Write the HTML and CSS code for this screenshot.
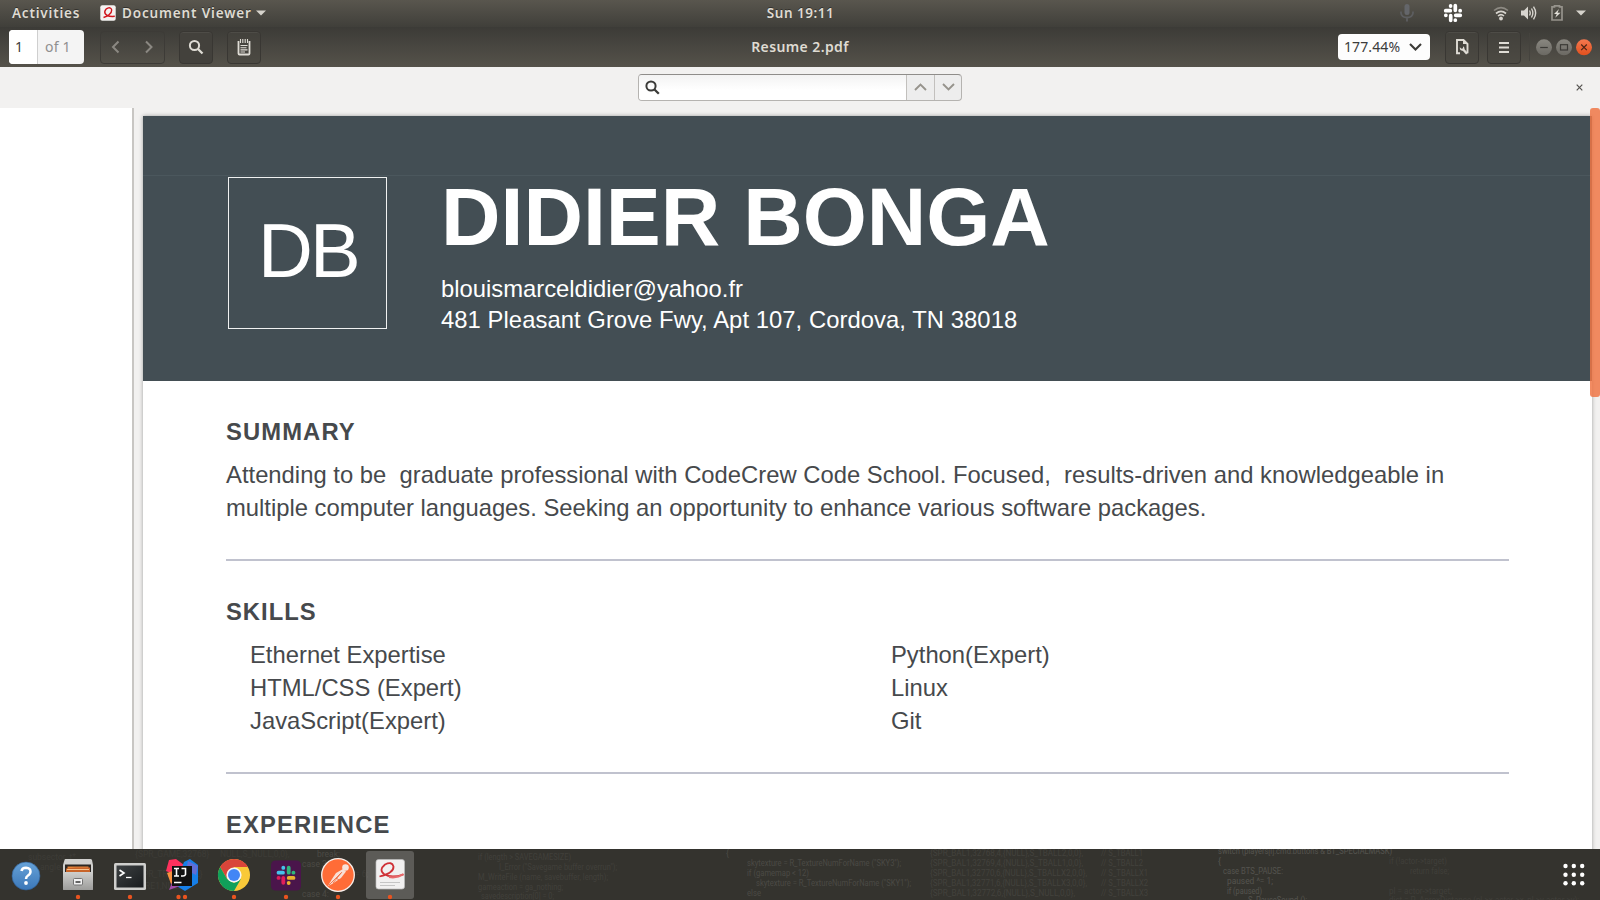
FILE: index.html
```html
<!DOCTYPE html>
<html lang="en">
<head>
<meta charset="utf-8">
<title>Resume 2.pdf</title>
<link rel="stylesheet" href="styles.css">
</head>
<body>
<div class="desktop">
  <div class="topbar">
    <div class="tb-left">
      <span class="activities">Activities</span>
      <svg class="app-ico" width="16" height="16" viewBox="0 0 16 16"><rect x=".3" y=".3" width="15.4" height="15.4" rx="2" fill="#f4f2f1"/><path d="M3.500 12.500C7 11.500 12 8.500 11.700 5C11.300 1.800 6 2 4.800 6.500C4.300 9.500 8 12 14.800 11.300" fill="none" stroke="#d0141c" stroke-width="1.400"/></svg>
      <span class="appname">Document Viewer</span>
      <svg class="caret" width="10" height="6" viewBox="0 0 10 6"><path d="M0 0.500H10L5 5.500Z" fill="#d6d3cc"/></svg>
    </div>
    <div class="clock">Sun 19:11</div>
    <div class="tb-right">
      <svg class="mic" width="14" height="18" viewBox="0 0 14 18"><rect x="4.500" y="0" width="5" height="11" rx="2.500" fill="#64666a"/><path d="M1 7.500V9Q1.500 13.500 7 13.500Q12.500 13.500 13 9V7.500M7 13.500V17.500" fill="none" stroke="#5d5e60" stroke-width="1.800"/></svg>
      <svg class="slack" width="20" height="20" viewBox="0 0 20 20" fill="none" stroke="#fff" stroke-width="3.700" stroke-linecap="round"><path d="M2.700 7.700H7.300M7.600 2.900V3.100M12.300 2.700V7.300M17.100 7.700H17.200M12.700 12.300H17.300M12.300 17V17.200M7.700 12.700V17.300M2.800 12.300H2.900"/></svg>
      <svg class="wifi" width="16" height="15" viewBox="0 0 16 15" fill="none"><path d="M1 4.500Q8-1.300 15 4.500" stroke="#8d8a83" stroke-width="1.600"/><path d="M3 7.500Q8 3.200 13 7.500" stroke="#d8d5cf" stroke-width="1.700"/><path d="M5 10Q8 7.200 11 10" stroke="#d8d5cf" stroke-width="1.500"/><circle cx="8" cy="12.500" r="1.900" fill="#d8d5cf"/></svg>
      <svg class="vol" width="16" height="14" viewBox="0 0 16 14"><path d="M0 4.500H3L7 0.500V13.500L3 9.500H0Z" fill="#d8d5cf"/><path d="M8.500 4.500Q10 7 8.500 9.500M10.500 2.500Q13.200 7 10.500 11.500M12.500 .7Q16.800 7 12.500 13.300" fill="none" stroke="#d8d5cf" stroke-width="1.400"/></svg>
      <svg class="bat" width="12" height="16" viewBox="0 0 12 16"><path d="M3.500 1.900V.8H8.500V1.900H11V15H1V1.900Z" fill="none" stroke="#96938c" stroke-width="1.700"/><path d="M8 4L3 9H5.800L4.200 12.700L9.500 7.700H6.500Z" fill="#e2dfd8"/></svg>
      <svg class="caret2" width="10" height="6" viewBox="0 0 10 6"><path d="M0 0.500H10L5 5.500Z" fill="#d6d3cc"/></svg>
    </div>
  </div>

  <div class="headerbar">
    <div class="pager"><span class="cur">1</span><span class="total">of 1</span></div>
    <div class="nav"><svg width="64" height="31" viewBox="0 0 64 31" fill="none" stroke="#8b8882" stroke-width="2"><path d="M17.500 9.500L12 15L17.500 20.500M45 9.500L50.500 15L45 20.500"/></svg></div>
    <div class="btn find"><svg width="16" height="16" viewBox="0 0 16 16" fill="none" stroke="#dfdcd5"><circle cx="6.500" cy="6.500" r="4.600" stroke-width="2"/><path d="M10 10L14.500 14.500" stroke-width="2.300"/></svg></div>
    <div class="btn note"><svg width="14" height="17" viewBox="0 0 14 17"><path d="M1.500 2V14.500Q1.500 15.500 2.500 15.500H11.500Q12.500 15.500 12.500 14.500V2" fill="none" stroke="#dfdcd5" stroke-width="1.800"/><path d="M3.500 0V4M5.800 0V4M8.200 0V4M10.500 0V4" stroke="#dfdcd5" stroke-width="1.100"/><path d="M3.500 6.500H10.500M3.500 8.700H9.500M3.500 10.900H10.500M3.500 13H8" stroke="#dfdcd5" stroke-width="1.100"/></svg></div>
    <div class="title">Resume 2.pdf</div>
    <div class="hb-right">
      <div class="zoom"><span>177.44%</span><svg width="13" height="8" viewBox="0 0 13 8"><path d="M1 1L6.500 6.500L12 1" fill="none" stroke="#3c3b37" stroke-width="2.100"/></svg></div>
      <div class="btn tool"><svg width="13" height="16" viewBox="0 0 13 16"><path d="M4 14.300H1V1H7.500L11.500 5V14.300" fill="none" stroke="#dfdcd5" stroke-width="1.900"/><path d="M7 1V5H11.500Z" fill="#dfdcd5"/><path d="M6.800 10L11 14.800" stroke="#dfdcd5" stroke-width="2.400"/><path d="M3.800 8.200Q3.500 11.800 6.800 11.800Q9 11 8.300 8.500L7 7.300V9.300L5.500 9.700Z" fill="#dfdcd5"/></svg></div>
      <div class="btn menu"><svg width="10" height="11" viewBox="0 0 10 11"><path d="M0 1H10M0 5.500H10M0 10H10" stroke="#dfdcd5" stroke-width="2"/></svg></div>
      <span class="vsep"></span>
      <div class="wins">
        <svg width="16" height="17" viewBox="0 0 16 17"><circle cx="8" cy="8.300" r="8" fill="url(#wg)"/><path d="M4.200 8.500H11.800" stroke="#3c3b37" stroke-width="1.200"/></svg>
        <svg width="16" height="17" viewBox="0 0 16 17"><circle cx="8" cy="8.300" r="8" fill="url(#wg)"/><rect x="4.500" y="5.700" width="7" height="5.300" fill="none" stroke="#3c3b37" stroke-width="1.200"/></svg>
        <svg width="16" height="17" viewBox="0 0 16 17"><circle cx="8" cy="8.300" r="8" fill="url(#wr)"/><path d="M5.200 5.500L10.800 11.100M10.800 5.500L5.200 11.100" stroke="#4a2415" stroke-width="1.200"/></svg>
      </div>
    </div>
  </div>

  <div class="findbar">
    <div class="search">
      <div class="entry"><svg width="15" height="15" viewBox="0 0 15 15" fill="none" stroke="#3a3a38"><circle cx="6" cy="6" r="4.600" stroke-width="2"/><path d="M9.500 9.500L13.800 13.800" stroke-width="2.300"/></svg></div>
      <div class="sbtn"><svg width="13" height="8" viewBox="0 0 13 8"><path d="M1 7L6.500 1.500L12 7" fill="none" stroke="#96938c" stroke-width="1.900"/></svg></div>
      <div class="sbtn last"><svg width="13" height="8" viewBox="0 0 13 8"><path d="M1 1L6.500 6.500L12 1" fill="none" stroke="#96938c" stroke-width="1.900"/></svg></div>
    </div>
    <svg class="close" width="7" height="7" viewBox="0 0 7 7"><path d="M.7 .7L6.300 6.300M6.300 .7L.7 6.300" stroke="#555350" stroke-width="1.200"/></svg>
  </div>

  <div class="content">
    <div class="sidebar"></div>
    <div class="view">
      <div class="page">
        <div class="banner">
          <div class="mono"><span>DB</span></div>
          <div class="who">
            <div class="name">DIDIER BONGA</div>
            <div class="contact c1">blouismarceldidier@yahoo.fr</div>
            <div class="contact c2">481 Pleasant Grove Fwy, Apt 107, Cordova, TN 38018</div>
          </div>
        </div>
        <div class="section">
          <div class="h h1">SUMMARY</div>
          <div class="p"><div class="l1">Attending to be&nbsp; graduate professional with CodeCrew Code School. Focused,&nbsp; results-driven and knowledgeable in</div><div class="l2">multiple computer languages. Seeking an opportunity to enhance various software packages.</div></div>
        </div>
        <div class="section second">
          <div class="h h2">SKILLS</div>
          <div class="cols">
            <div class="p"><div>Ethernet Expertise</div><div>HTML/CSS (Expert)</div><div>JavaScript(Expert)</div></div>
            <div class="p"><div>Python(Expert)</div><div>Linux</div><div>Git</div></div>
          </div>
        </div>
        <div class="section third"><div class="h h3">EXPERIENCE</div></div>
      </div>
      <div class="scroll"></div>
    </div>
  </div>

  <div class="dock">
    <svg class="wall" width="1600" height="51" viewBox="0 849 1600 51" font-family="Roboto, sans-serif" font-size="8.500" fill="#4b4a45">
      <g fill="#3d3c37"><text x="28" y="860">subsector_t*</text><text x="40" y="870">angle_t</text><text x="135" y="857">{SPR_GAME,32768}</text><text x="135" y="877">{SPR_TREE,NULL}</text><text x="140" y="889">TRE1,NULL,0</text><text x="220" y="857">NULL,S_NULL,0,0},</text><text x="355" y="877">= 6;</text></g>
      <text x="317" y="857">break;</text><text x="302" y="867">case 3:</text><text x="302" y="897">case 4:</text>
      <g fill="#41403b"><text x="478" y="860" textLength="93" lengthAdjust="spacingAndGlyphs">if (length &gt; SAVEGAMESIZE)</text><text x="499" y="870" textLength="118" lengthAdjust="spacingAndGlyphs">I_Error ("Savegame buffer overrun");</text><text x="478" y="880" textLength="130" lengthAdjust="spacingAndGlyphs">M_WriteFile (name, savebuffer, length);</text><text x="478" y="890" textLength="85" lengthAdjust="spacingAndGlyphs">gameaction = ga_nothing;</text><text x="481" y="899" textLength="73" lengthAdjust="spacingAndGlyphs">savedescription[0] = 0;</text></g>
      <text x="726" y="856">{</text><text x="747" y="866" textLength="154" lengthAdjust="spacingAndGlyphs">skytexture = R_TextureNumForName ("SKY3");</text><text x="747" y="876" textLength="62" lengthAdjust="spacingAndGlyphs">if (gamemap &lt; 12)</text><text x="756" y="886" textLength="155" lengthAdjust="spacingAndGlyphs">skytexture = R_TextureNumForName ("SKY1");</text><text x="747" y="896" textLength="14" lengthAdjust="spacingAndGlyphs">else</text>
      <g fill="#43423d"><text x="930" y="856" textLength="153" lengthAdjust="spacingAndGlyphs">{SPR_BAL1,32768,4,{NULL},S_TBALL2,0,0},</text><text x="930" y="866" textLength="153" lengthAdjust="spacingAndGlyphs">{SPR_BAL1,32769,4,{NULL},S_TBALL1,0,0},</text><text x="930" y="876" textLength="157" lengthAdjust="spacingAndGlyphs">{SPR_BAL1,32770,6,{NULL},S_TBALLX2,0,0},</text><text x="930" y="886" textLength="157" lengthAdjust="spacingAndGlyphs">{SPR_BAL1,32771,6,{NULL},S_TBALLX3,0,0},</text><text x="930" y="896" textLength="145" lengthAdjust="spacingAndGlyphs">{SPR_BAL1,32772,6,{NULL},S_NULL,0,0},</text>
      <text x="1101" y="856" textLength="42" lengthAdjust="spacingAndGlyphs">// S_TBALL1</text><text x="1101" y="866" textLength="42" lengthAdjust="spacingAndGlyphs">// S_TBALL2</text><text x="1101" y="876" textLength="47" lengthAdjust="spacingAndGlyphs">// S_TBALLX1</text><text x="1101" y="886" textLength="47" lengthAdjust="spacingAndGlyphs">// S_TBALLX2</text><text x="1101" y="896" textLength="47" lengthAdjust="spacingAndGlyphs">// S_TBALLX3</text></g>
      <g fill="#55544e"><text x="1218" y="854" textLength="174" lengthAdjust="spacingAndGlyphs">switch (players[i].cmd.buttons &amp; BT_SPECIALMASK)</text><text x="1218" y="864">{</text><text x="1223" y="874" textLength="60" lengthAdjust="spacingAndGlyphs">case BTS_PAUSE:</text><text x="1227" y="884" textLength="46" lengthAdjust="spacingAndGlyphs">paused ^= 1;</text><text x="1227" y="894" textLength="35" lengthAdjust="spacingAndGlyphs">if (paused)</text><text x="1248" y="903" textLength="59" lengthAdjust="spacingAndGlyphs">S_PauseSound ();</text></g>
      <g fill="#403f3a"><text x="1389" y="864" textLength="58" lengthAdjust="spacingAndGlyphs">if (!actor-&gt;target)</text><text x="1410" y="874" textLength="39" lengthAdjust="spacingAndGlyphs">return false;</text><text x="1389" y="894" textLength="63" lengthAdjust="spacingAndGlyphs">pl = actor-&gt;target;</text><text x="1389" y="903" textLength="190" lengthAdjust="spacingAndGlyphs">dist = P_AproxDistance (pl-&gt;x-actor-&gt;x, pl-&gt;y-actor-&gt;y);</text></g>
    </svg>
    <div class="slot"><svg width="52" height="51" viewBox="0 0 52 51"><circle cx="26" cy="27" r="14" fill="url(#hb)" stroke="#2d5c92" stroke-width=".6"/><path d="M21.500 22Q22 18.700 26 18.700Q30.500 19 30.500 22.500Q30.500 25 28 26.500Q26 27.800 26 30" fill="none" stroke="#fff" stroke-width="2.500"/><circle cx="26" cy="34" r="1.900" fill="#fff"/></svg></div>
    <div class="slot"><svg width="52" height="51" viewBox="0 0 52 51"><path d="M12.500 11Q12.500 10 13.500 10H38.500Q39.500 10 40 11L41 16V40.500H11V16Z" fill="#d0d0ce"/><rect x="13" y="15.500" width="26" height="9" fill="#2c2723"/><path d="M15.500 17.500H36.500V24H15.500Z" fill="#e8853a"/><path d="M14 19.500L24 18.500H38V24H14Z" fill="#c86429"/><path d="M15 20.500H37" stroke="#f7c38e" stroke-width="1"/><rect x="11" y="23" width="30" height="18" rx="1" fill="url(#cab)"/><rect x="21.500" y="29.500" width="9" height="6.500" rx="1" fill="#f2f2f2" stroke="#737373"/><path d="M23.500 33H28.500" stroke="#555" stroke-width="1.800"/><circle cx="26" cy="48" r="2.200" fill="#e95420"/></svg></div>
    <div class="slot"><svg width="52" height="51" viewBox="0 0 52 51"><rect x="10" y="14" width="32" height="27" rx="1.500" fill="#cfcfcd"/><rect x="12.500" y="16.500" width="27" height="22" fill="url(#term)"/><path d="M15.500 21L20 24L15.500 27" fill="none" stroke="#fff" stroke-width="1.600"/><path d="M22 28.500H27.500" stroke="#fff" stroke-width="1.300"/><circle cx="26" cy="48" r="2.200" fill="#e95420"/></svg></div>
    <div class="slot"><svg width="52" height="51" viewBox="0 0 52 51"><path d="M13 11L20 10L28 16L22 27L10 22Z" fill="#fe315d"/><path d="M11 24L19 21V34L15 35Z" fill="#f9903e"/><path d="M28 13L34 10L42 16V34L29 42L19 36Z" fill="#167fe8"/><path d="M32 12L42 17L40 26L30 21Z" fill="#5f6dd6"/><path d="M17 31L13 41L24 37Z" fill="#a04ba7"/><rect x="16" y="17" width="20" height="20" fill="#111"/><path d="M18 19.500H23M20.500 19.500V27M18 27H23M25.500 19.500H29.500V25.500Q29 27 27 27H25M18 33.500H25.500" fill="none" stroke="#fff" stroke-width="1.600"/><circle cx="22.500" cy="48" r="2.200" fill="#e95420"/><circle cx="29" cy="48" r="2.200" fill="#e95420"/></svg></div>
    <div class="slot"><svg width="52" height="51" viewBox="0 0 52 51"><circle cx="26" cy="26" r="16" fill="#f9c939"/><path d="M12.140 18A16 16 0 0 1 39.860 18L26 18L19.100 30Z" fill="#d9453a"/><path d="M12.140 18A16 16 0 0 0 26 42L32.900 30L26 34L19.070 30Z" fill="#10a05a"/><circle cx="26" cy="26" r="7.600" fill="#f5f5f5"/><circle cx="26" cy="26" r="6" fill="#4286f5"/><circle cx="26" cy="48" r="2.200" fill="#e95420"/></svg></div>
    <div class="slot"><svg width="52" height="51" viewBox="0 0 52 51"><rect x="11" y="11.500" width="30" height="30" rx="4.500" fill="#4a154b"/><g stroke-width="3.800" stroke-linecap="round" fill="none"><path d="M18.500 23.700H23M23.300 18.700V18.900" stroke="#45c3ec"/><path d="M28.700 18.700V23.700M33.400 23.700H33.500" stroke="#2fb67c"/><path d="M28.700 28.900H33.500M28.700 33.800V34" stroke="#ecb22e"/><path d="M23.300 28.900V33.800M18.500 28.900H18.700" stroke="#e01e5a"/></g><circle cx="26" cy="48" r="2.200" fill="#e95420"/></svg></div>
    <div class="slot"><svg width="52" height="51" viewBox="0 0 52 51"><circle cx="26" cy="26" r="16.300" fill="#ff6c37" stroke="#f8eee9" stroke-width="1.300"/><circle cx="33.500" cy="18.500" r="3.300" fill="#f8e3da"/><path d="M31 20L34 22.500L29 29L20 35L16 37L20 30L24 24Z" fill="#f8dfd5"/><path d="M17 36L29 24M21 34L30 23M24 29L27 31" stroke="#ee6335" stroke-width=".8"/><circle cx="26" cy="48" r="2.200" fill="#e95420"/></svg></div>
    <div class="slot active"><svg width="52" height="51" viewBox="0 0 52 51"><rect x="12" y="10.500" width="28.500" height="29.500" rx="2.500" fill="#f1f0f0" stroke="#bbb" stroke-width=".7"/><path d="M15.500 27.500Q30 24 29.500 17.500Q28 12 21 15.500Q14.500 21 20 25Q27 29.500 39.500 25.500" fill="none" stroke="#cf3036" stroke-width="1.800"/><path d="M25 28Q33 29.500 39.500 25" fill="none" stroke="#e86a6c" stroke-width="2"/><path d="M16 33.500H36M16 36.500H31" stroke="#c5c5c5" stroke-width="1.200"/><circle cx="26" cy="48" r="2.200" fill="#e95420"/></svg></div>
    <svg class="apps" width="22" height="24" viewBox="0 0 22 24" fill="#fff"><circle cx="2.500" cy="3" r="2.200"/><circle cx="10.800" cy="3" r="2.200"/><circle cx="19.200" cy="3" r="2.200"/><circle cx="2.500" cy="11.700" r="2.200"/><circle cx="10.800" cy="11.700" r="2.200"/><circle cx="19.200" cy="11.700" r="2.200"/><circle cx="2.500" cy="20.300" r="2.200"/><circle cx="10.800" cy="20.300" r="2.200"/><circle cx="19.200" cy="20.300" r="2.200"/></svg>
  </div>
</div>
<svg width="0" height="0" class="defs"><defs>
<linearGradient id="wg" x1="0" y1="0" x2="0" y2="1"><stop offset="0" stop-color="#898780"/><stop offset="1" stop-color="#6b6963"/></linearGradient>
<linearGradient id="wr" x1="0" y1="0" x2="0" y2="1"><stop offset="0" stop-color="#f4784f"/><stop offset="1" stop-color="#e2501d"/></linearGradient>
<linearGradient id="hb" x1="0" y1="0" x2="0" y2="1"><stop offset="0" stop-color="#66a2d8"/><stop offset="1" stop-color="#3b77b8"/></linearGradient>
<linearGradient id="cab" x1="0" y1="0" x2="0" y2="1"><stop offset="0" stop-color="#cfcfcd"/><stop offset="1" stop-color="#9c9c9a"/></linearGradient>
<linearGradient id="term" x1="0" y1="0" x2="1" y2="1"><stop offset="0" stop-color="#3c4042"/><stop offset="1" stop-color="#191c1e"/></linearGradient>
</defs></svg>
</body>
</html>
```
FILE: styles.css
```css
* { box-sizing: border-box; }
body { margin: 0; overflow: hidden; font-family: "Noto Sans", "Open Sans", sans-serif; }
svg { display: block; flex: none; }
.defs { position: absolute; }
.desktop { width: 1600px; height: 900px; display: flex; flex-direction: column; overflow: hidden; }

.topbar { height: 27px; flex: none; display: grid; grid-template-columns: 1fr auto 1fr; align-items: center; padding-bottom: 1px; background: linear-gradient(#59564e, #403f3a); color: #dfdbd2; font-size: 13.5px; font-weight: 600; white-space: nowrap; text-shadow: 0 -1px 0 #33322e; }
.tb-left { display: flex; align-items: center; padding-left: 12px; }
.activities { width: 88px; letter-spacing: 0.8px; }
.app-ico { margin-top: -1px; }
.appname { margin-left: 6px; width: 128px; letter-spacing: 0.85px; }
.caret { margin-left: 6px; }
.clock { letter-spacing: 0.5px; padding-left: 1px; }
.tb-right { display: flex; align-items: center; justify-content: flex-end; padding-right: 14px; }
.slack { margin-left: 29px; }
.wifi { margin-left: 30px; }
.vol { margin-left: 12px; }
.bat { margin-left: 14px; }
.caret2 { margin-left: 13px; }

.headerbar { height: 40px; flex: none; display: flex; align-items: center; position: relative; background: linear-gradient(#3c3b37, #55524a); padding-left: 9px; }
.pager { width: 75px; height: 34px; display: flex; border-radius: 4px; overflow: hidden; background: #f4f4f4; font-size: 14px; line-height: 33px; }
.cur { width: 29px; padding-left: 6px; background: #fff; color: #3c3c3c; border-right: 1px solid #cfcfcf; }
.total { padding-left: 7px; color: #8f8f8f; letter-spacing: 0.2px; }
.nav { width: 65px; height: 33px; margin-left: 16px; border: 1px solid #3d3b37; border-radius: 4px; }
.btn { width: 34px; height: 33px; display: flex; align-items: center; justify-content: center; border: 1px solid #393733; border-radius: 4px; background: rgba(70, 68, 62, 0.5); box-shadow: inset 0 1px 0 rgba(255, 255, 255, 0.06); }
.find { margin-left: 14px; background: #43413c; }
.note { margin-left: 14px; }
.title { position: absolute; left: 0; right: 0; top: 10px; text-align: center; font-size: 14px; line-height: 20px; font-weight: 600; color: #dfdbd2; letter-spacing: 0.4px; }
.hb-right { margin-left: auto; display: flex; align-items: center; padding-right: 8px; }
.zoom { width: 92px; height: 26px; display: flex; align-items: center; justify-content: space-between; padding: 0 8px 1px 6px; border-radius: 4px; background: #fdfdfd; font-size: 14px; color: #3c3c3c; letter-spacing: 0.1px; }
.tool { margin-left: 15px; }
.menu { margin-left: 8px; }
.vsep { width: 1px; height: 28px; margin-left: 8px; background: #45433e; }
.wins { display: flex; gap: 4px; margin-left: 6px; }

.findbar { height: 41px; flex: none; display: flex; justify-content: center; position: relative; padding-top: 7px; background: #f2f1f0; }
.search { width: 324px; height: 27px; display: flex; border: 1px solid #b5b3b0; border-top-color: #8f8d8a; border-radius: 4px; overflow: hidden; background: #ededed; }
.entry { flex: 1; padding: 5px 6px; background: linear-gradient(#f3f3f3, #fff 60%); }
.sbtn { width: 28px; display: flex; align-items: center; justify-content: center; padding-bottom: 1px; border-left: 1px solid #c2c0bd; }
.sbtn.last { width: 27px; }
.close { position: absolute; right: 17px; top: 17px; }

.content { height: 741px; flex: none; display: flex; overflow: hidden; background: #f2f1f0; }
.sidebar { width: 134px; flex: none; background: #fff; border-right: 2px solid #c8c6c3; }
.view { flex: 1; min-width: 0; position: relative; padding: 8px 8px 0 9px; }
.page { height: 760px; background: #fff; box-shadow: 0 0 4px rgba(0, 0, 0, 0.35); font-family: "Liberation Sans", Arial, sans-serif; font-size: 23.81px; color: #46494c; white-space: nowrap; }
.scroll { position: absolute; right: 0; top: 0; width: 10px; height: 289px; border-radius: 3px; background: rgba(240, 119, 70, 0.85); }
.banner { height: 265px; display: flex; padding: 61px 0 0 85px; background: linear-gradient(#4b575d, #4b575d) 0 59px / 100% 1px no-repeat #434e54; color: #fff; }
.mono { width: 159px; height: 152px; border: 1px solid #f0f1f1; font-size: 76px; line-height: 80px; padding: 33px 0 0 29px; letter-spacing: -3px; }
.who { padding-left: 54px; }
.name { font-size: 82.4px; font-weight: bold; line-height: 90px; margin-top: -6px; letter-spacing: 0; }
.contact { line-height: 31px; letter-spacing: 0; }
.c1 { margin-top: 12px; }
.c2 { letter-spacing: 0.06px; }
.section { margin: 36px 83px 0 83px; padding-bottom: 35px; border-bottom: 2px solid #c0c2ce; }
.second, .third { margin-top: 36px; }
.third { border: 0; }
.h { font-weight: bold; line-height: 30px; letter-spacing: 1.1px; margin-bottom: 11px; }
.h2 { letter-spacing: 1px; }
.p { line-height: 33px; }
.l1 { letter-spacing: 0.01px; }
.cols { display: grid; grid-template-columns: 641px 1fr; padding-left: 24px; }

.dock { flex: 1; display: flex; position: relative; background: #34332e; overflow: hidden; }
.wall { position: absolute; left: 0; top: 0; }
.slot { width: 52px; height: 51px; flex: none; position: relative; }
.active::before { content: ""; position: absolute; left: 2px; top: 2px; width: 48px; height: 48px; border-radius: 3px; background: rgba(255, 255, 255, 0.2); }
.active svg { position: relative; }
.apps { position: absolute; right: 15px; top: 14px; }
```
